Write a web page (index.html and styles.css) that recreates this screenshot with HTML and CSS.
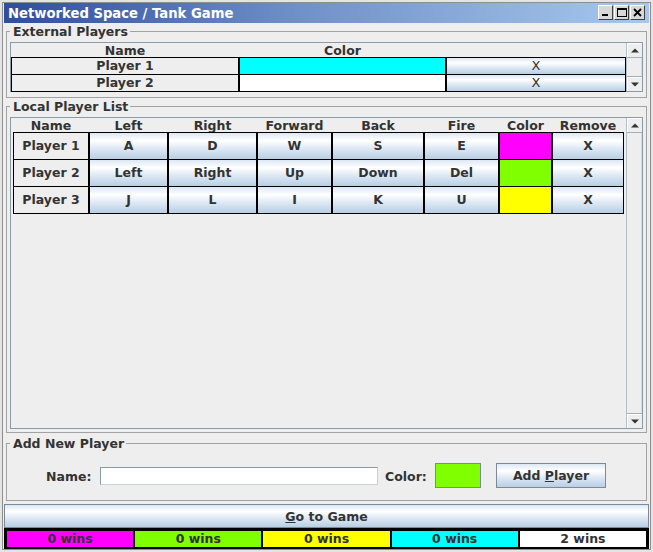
FILE: index.html
```html
<!DOCTYPE html>
<html>
<head>
<meta charset="utf-8">
<title>Networked Space / Tank Game</title>
<link rel="stylesheet" href="styles.css">
</head>
<body>
<div class="window">
  <div class="frame">
    <div class="titlebar">
      <span class="title">Networked Space / Tank Game</span>
      <div class="wbtns">
        <span class="wbtn"><svg width="13" height="13" viewBox="0 0 13 13"><rect x="3" y="8" width="6" height="2" fill="#000"/></svg></span>
        <span class="wbtn"><svg width="13" height="13" viewBox="0 0 13 13"><rect x="2.5" y="2.5" width="9" height="8" fill="none" stroke="#000" stroke-width="1"/><rect x="2" y="2" width="10" height="2" fill="#000"/></svg></span>
        <span class="wbtn"><svg width="13" height="13" viewBox="0 0 13 13"><path d="M3 3 L10 10 M10 3 L3 10" stroke="#000" stroke-width="1.8" fill="none"/></svg></span>
      </div>
    </div>

    <fieldset class="group ext">
      <legend>External Players</legend>
      <div class="pane ext-pane">
        <div class="viewport">
          <div class="ehead"><div>Name</div><div>Color</div><div></div></div>
          <div class="erow">
            <div class="ecell">Player 1</div>
            <div class="ecell c-cyan"></div>
            <div class="ecell kbtn thin">X</div>
          </div>
          <div class="erow">
            <div class="ecell">Player 2</div>
            <div class="ecell c-white"></div>
            <div class="ecell kbtn thin">X</div>
          </div>
        </div>
        <div class="sb">
          <div class="sb-btn sb-up"><svg width="8" height="5" viewBox="0 0 8 5"><path d="M0 4.5 L4 0.5 L8 4.5 Z" fill="#333"/></svg></div>
          <div class="sb-track"></div>
          <div class="sb-btn sb-down"><svg width="8" height="5" viewBox="0 0 8 5"><path d="M0 0.5 L4 4.5 L8 0.5 Z" fill="#333"/></svg></div>
        </div>
      </div>
    </fieldset>

    <fieldset class="group local">
      <legend>Local Player List</legend>
      <div class="pane local-pane">
        <div class="viewport">
          <div class="lhead">
            <div>Name</div><div>Left</div><div>Right</div><div>Forward</div><div>Back</div><div>Fire</div><div>Color</div><div>Remove</div>
          </div>
          <div class="lrow">
            <div class="lcell">Player 1</div>
            <div class="lcell kbtn">A</div>
            <div class="lcell kbtn">D</div>
            <div class="lcell kbtn">W</div>
            <div class="lcell kbtn">S</div>
            <div class="lcell kbtn">E</div>
            <div class="lcell c-magenta"></div>
            <div class="lcell kbtn">X</div>
          </div>
          <div class="lrow">
            <div class="lcell">Player 2</div>
            <div class="lcell kbtn">Left</div>
            <div class="lcell kbtn">Right</div>
            <div class="lcell kbtn">Up</div>
            <div class="lcell kbtn">Down</div>
            <div class="lcell kbtn">Del</div>
            <div class="lcell c-green"></div>
            <div class="lcell kbtn">X</div>
          </div>
          <div class="lrow">
            <div class="lcell">Player 3</div>
            <div class="lcell kbtn">J</div>
            <div class="lcell kbtn">L</div>
            <div class="lcell kbtn">I</div>
            <div class="lcell kbtn">K</div>
            <div class="lcell kbtn">U</div>
            <div class="lcell c-yellow"></div>
            <div class="lcell kbtn">X</div>
          </div>
        </div>
        <div class="sb">
          <div class="sb-btn sb-up"><svg width="8" height="5" viewBox="0 0 8 5"><path d="M0 4.5 L4 0.5 L8 4.5 Z" fill="#333"/></svg></div>
          <div class="sb-track"></div>
          <div class="sb-btn sb-down"><svg width="8" height="5" viewBox="0 0 8 5"><path d="M0 0.5 L4 4.5 L8 0.5 Z" fill="#333"/></svg></div>
        </div>
      </div>
    </fieldset>

    <fieldset class="group add">
      <legend>Add New Player</legend>
      <div class="addrow">
        <span class="lbl name-lbl">Name:</span>
        <div class="field"></div>
        <span class="lbl color-lbl">Color:</span>
        <div class="swatch c-green"></div>
        <div class="abtn">Add <u>P</u>layer</div>
      </div>
    </fieldset>

    <div class="gobtn"><u>G</u>o to Game</div>

    <div class="wins">
      <div class="win c-magenta">0 wins</div>
      <div class="win c-green">0 wins</div>
      <div class="win c-yellow">0 wins</div>
      <div class="win c-cyan">0 wins</div>
      <div class="win c-white">2 wins</div>
    </div>
  </div>
</div>
</body>
</html>
```

FILE: styles.css
```css
* { box-sizing: border-box; }
html, body { margin: 0; padding: 0; background: #eeeeee; }
body {
  font-family: "DejaVu Sans", "Liberation Sans", sans-serif;
  font-size: 12.5px;
  font-weight: bold;
  color: #333333;
}

.window {
  width: 653px;
  height: 552px;
  border: 2px solid #e4e4e4;
  background: #eeeeee;
}
.frame {
  height: 548px;
  border: 1px solid #8e8e8e;
  padding: 0 1px;
  display: flex;
  flex-direction: column;
}

.titlebar {
  height: 20px;
  flex: none;
  display: flex;
  justify-content: space-between;
  align-items: flex-start;
  padding: 0 4px 0 4px;
  background: linear-gradient(90deg, #2f4e9b 0%, #6f8fc8 45%, #a7c8ec 100%);
}
.title {
  color: #ffffff;
  font-size: 13.2px;
  line-height: 21px;
  white-space: nowrap;
}
.wbtns {
  display: flex;
  gap: 1px;
  margin-top: 2px;
}
.wbtn {
  width: 15px;
  height: 15px;
  display: flex;
  align-items: center;
  justify-content: center;
  background: #d8d8d8;
  border: 1px solid;
  border-color: #ffffff #404040 #404040 #ffffff;
}

.group {
  flex: none;
  margin: 0 2px;
  padding: 4px 3px 5px 3px;
  border: 1px solid #a2a2a2;
  min-width: 0;
}
.group legend {
  padding: 0 2px 0 3px;
  height: 14px;
  line-height: 15px;
  font-size: 12.5px;
}
.ext { margin-top: 1px; }
.local { margin-top: 1px; padding-bottom: 3px; }
.add { margin-top: 3px; padding: 13px 4px 12px 3px; }

.pane {
  display: flex;
  border: 1px solid #8c99a6;
  background: #eeeeee;
}
.ext-pane { height: 50px; }
.local-pane { height: 312px; }
.viewport { flex: 1; min-width: 0; }

.sb {
  width: 16px;
  flex: none;
  display: flex;
  flex-direction: column;
  border-left: 1px solid #b4bfca;
  background: #eeeeee;
}
.sb-btn {
  height: 15px;
  flex: none;
  display: flex;
  align-items: center;
  justify-content: center;
  background: #eeeeee;
}
.sb-up { border-bottom: 1px solid #a4afba; box-shadow: inset 1px 1px 0 #ffffff; }
.sb-down { border-top: 1px solid #a4afba; box-shadow: inset 1px 1px 0 #ffffff; }
.sb-track { flex: 1; border-right: 1px solid #d8dde2; }

.ehead, .erow {
  display: grid;
  grid-template-columns: 228px 207px 180px;
}
.ehead {
  height: 14px;
  line-height: 15px;
  text-align: center;
}
.erow { height: 17px; }
.ecell {
  border: 1px solid #000000;
  line-height: 16px;
  text-align: center;
  white-space: nowrap;
}
.thin { font-weight: normal; font-size: 13px; }

.lhead, .lrow {
  display: grid;
  grid-template-columns: 76px 79px 89px 75px 92px 75px 53px 72px;
  padding-left: 2px;
}
.lhead {
  height: 14px;
  line-height: 15px;
  text-align: center;
}
.lrow { height: 27px; }
.lcell {
  border: 1px solid #000000;
  line-height: 26px;
  text-align: center;
  white-space: nowrap;
}

.kbtn {
  background: linear-gradient(#dde8f3 0%, #ffffff 30%, #dde8f3 60%, #b8cfe5 100%);
}

.c-cyan { background: #00ffff; }
.c-white { background: #ffffff; }
.c-magenta { background: #ff00ff; }
.c-green { background: #80ff00; }
.c-yellow { background: #ffff00; }

.addrow {
  height: 25px;
  display: flex;
  align-items: center;
  justify-content: center;
}
.lbl { white-space: nowrap; line-height: 15px; padding-top: 1px; flex: none; }
.name-lbl { width: 54px; }
.field {
  flex: none;
  width: 278px;
  height: 18px;
  background: #ffffff;
  border: 1px solid;
  border-color: #8c99a6 #c8d0d8 #c8d0d8 #8c99a6;
  margin-right: 7px;
}
.color-lbl { width: 50px; }
.swatch {
  flex: none;
  width: 46px;
  height: 25px;
  border: 1px solid #7a8a99;
  margin-right: 15px;
}
.abtn {
  flex: none;
  width: 110px;
  height: 25px;
  border: 1px solid #7a8a99;
  line-height: 24px;
  text-align: center;
  background: linear-gradient(#dde8f3 0%, #ffffff 30%, #dde8f3 60%, #b8cfe5 100%);
}

.gobtn {
  flex: none;
  margin-top: 3px;
  height: 24px;
  border: 1px solid #7a8a99;
  line-height: 23px;
  text-align: center;
  background: linear-gradient(#dde8f3 0%, #ffffff 30%, #dde8f3 60%, #b8cfe5 100%);
}

.wins {
  flex: none;
  height: 21px;
  background: #000000;
  padding: 3px 3px 2px 3px;
  display: flex;
  gap: 2px;
}
.win {
  flex: 1;
  height: 16px;
  line-height: 16px;
  text-align: center;
  white-space: nowrap;
}
```
